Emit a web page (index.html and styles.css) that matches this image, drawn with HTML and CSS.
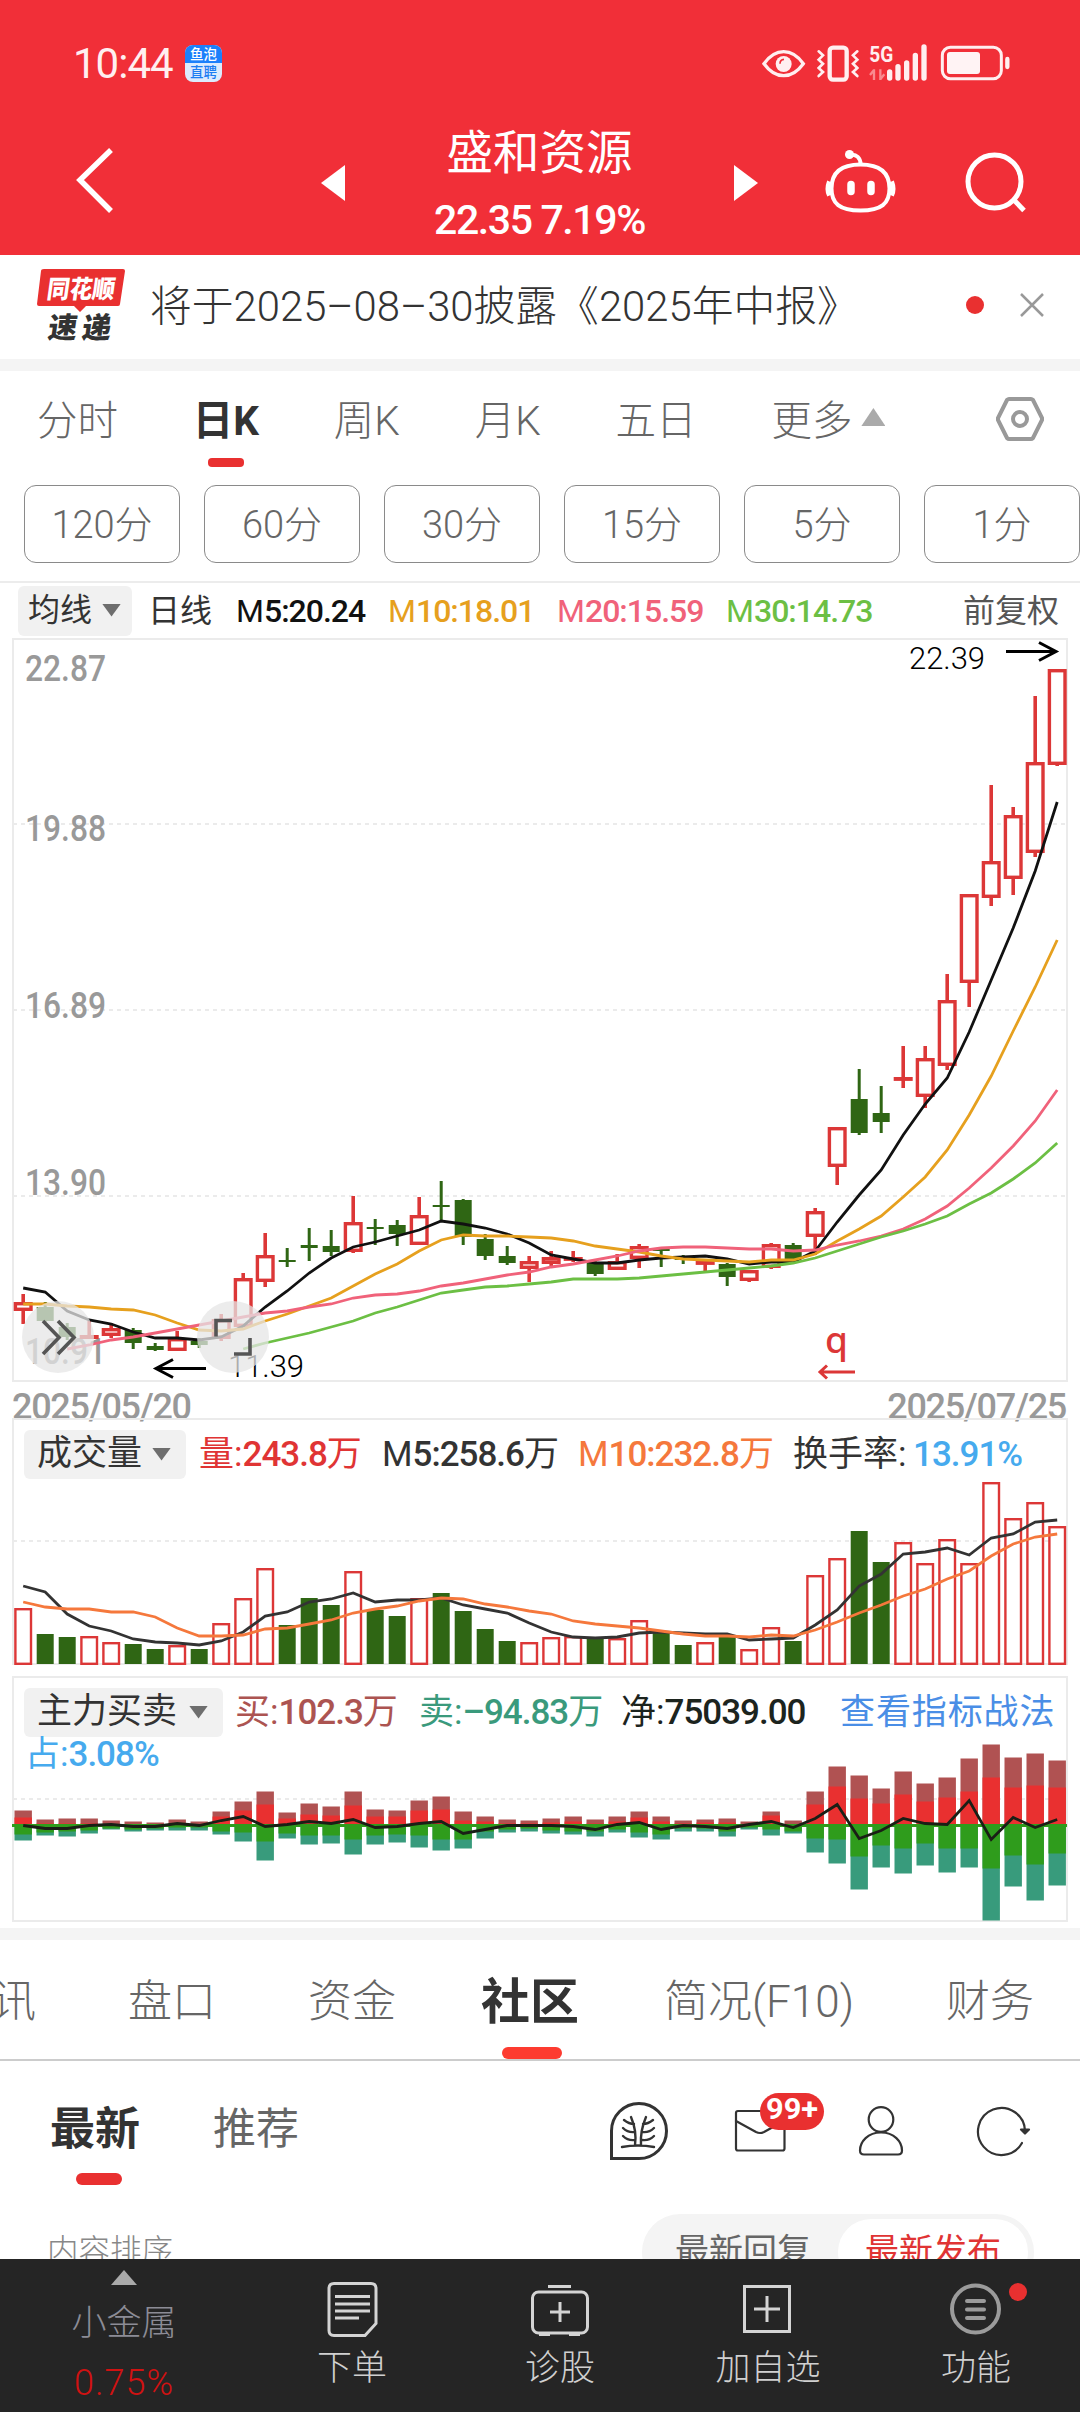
FILE: index.html
```html
<!DOCTYPE html>
<html lang="zh-CN">
<head>
  <meta charset="UTF-8" />
  <meta name="viewport" content="width=device-width, initial-scale=1" />
  <title>盛和资源 - 日K</title>
  <link rel="stylesheet" href="styles.css">
</head>
<body>
  <header>
    <div class="status-bar">
      <span class="time">10:44</span>
      <span class="app-badge"><i>鱼泡</i><i>直聘</i></span>
      <svg class="status-icons" viewBox="0 0 1020 198" width="340" height="66" fill="none" stroke="#ffeff0">
        <path d="M72 101Q98 65 131 65T190 101Q164 137 131 137T72 101Z" stroke-width="10"/>
        <circle cx="131" cy="102" r="24" fill="#ffeff0" stroke="none"/>
        <path d="M120 101q0-12 12-13" stroke="#f12f38" stroke-width="5"/>
        <rect x="269" y="53" width="51" height="96" rx="10" stroke-width="13"/>
        <path d="M236 64l13 12-13 13 13 12-13 13 13 12-13 12M352 64l-13 12 13 13-13 12 13 13-13 12 13 12" stroke-width="8" stroke-linecap="round"/>
        <text class="net" x="388" y="97" textLength="72" lengthAdjust="spacingAndGlyphs">5G</text>
        <path d="M402 118v32M390 135l12-15M421 118v32M433 133l-12 15" stroke="#f98a8f" stroke-width="7"/>
        <path d="M449 126v18M474 110v34M500 99v45M526 76v68M552 51v93" stroke-width="16" stroke-linecap="round"/>
        <rect x="607" y="52" width="177" height="94" rx="24" stroke-width="9"/>
        <rect x="621" y="66" width="99" height="66" rx="9" fill="#fff3f4" stroke="none"/>
        <path d="M802 87v24" stroke-width="13" stroke-linecap="round"/>
      </svg>
    </div>
    <div class="title-bar">
      <svg class="back" viewBox="65 126 60 129" width="60" height="129"><path d="M111 150L80 180l31 31" fill="none" stroke="#fff" stroke-width="5.5"/></svg>
      <div class="stock">
        <span class="tri tri-left"></span>
        <div class="stock-name">
          <h1>盛和资源</h1>
          <p>22.35 7.19%</p>
        </div>
        <span class="tri tri-right"></span>
      </div>
      <svg class="robot" viewBox="820 126 80 129" width="80" height="129" fill="none" stroke="#fff" stroke-width="4">
        <path d="M860.500 164.500c-20 0-29 9-29 24 0 15 8 22 29 22s29-7 29-22c0-15-9-24-29-24z"/>
        <path d="M860.500 164c0-6-4-10-10-9"/>
        <circle cx="849.500" cy="154.500" r="4.500" fill="#fff" stroke="none"/>
        <path d="M829.500 181.500q-3 8 0 14M891.500 181.500q3 8 0 14" stroke-width="5"/>
        <path d="M851 184.500v7M871 184.500v7" stroke-width="7.500" stroke-linecap="round"/>
      </svg>
      <svg class="search" viewBox="960 126 80 129" width="80" height="129" fill="none" stroke="#fff" stroke-width="5">
        <circle cx="994.500" cy="181.500" r="26.500"/>
        <path d="M1013 199l11 11.500"/>
      </svg>
    </div>
  </header>

  <section class="notice">
    <svg class="logo" viewBox="32 264 100 82" width="100" height="82">
      <path d="M44 269h79q2 0 2 2l-5 33q0 2-2 2H86l-6 6-6-6H39q-2 0-2-2l4-33q0-2 3-2z" fill="#e93030"/>
      <text class="logo-top" transform="translate(46 298) skewX(-8)" textLength="68" lengthAdjust="spacingAndGlyphs">同花顺</text>
      <text class="logo-bottom" transform="translate(47 338) skewX(-8)" textLength="63">速递</text>
    </svg>
    <span class="notice-text">将于2025–08–30披露《2025年中报》</span>
    <span class="dot"></span>
    <svg class="close" viewBox="0 0 28 28" width="28" height="28"><path d="M3 3l22 22M25 3L3 25" stroke="#999" stroke-width="2.500"/></svg>
  </section>

  <nav class="period">
    <a>分时</a>
    <a class="active">日K</a>
    <a>周K</a>
    <a>月K</a>
    <a>五日</a>
    <a class="more">更多<span class="tri-up"></span></a>
    <svg class="setting" viewBox="0 0 50 48" width="50" height="48" fill="none" stroke="#999" stroke-width="4">
      <path d="M14 4h22q1 0 2 1l9 18v2l-9 18q-1 1-2 1H14q-1 0-2-1L3 25v-2l9-18q1-1 2-1z"/>
      <circle cx="25" cy="24" r="7"/>
    </svg>
  </nav>
  <div class="minutes">
    <button>120分</button>
    <button>60分</button>
    <button>30分</button>
    <button>15分</button>
    <button>5分</button>
    <button>1分</button>
  </div>

  <section class="chart">
    <div class="legend ma-legend">
      <span class="chip">均线<i class="caret"></i></span>
      <span>日线</span>
      <span class="m5">M<b>5:20.24</b></span>
      <span class="m10">M<b>10:18.01</b></span>
      <span class="m20">M<b>20:15.59</b></span>
      <span class="m30">M<b>30:14.73</b></span>
      <span class="adjust">前复权</span>
    </div>
    <svg id="kline" viewBox="0 638 1080 744" width="1080" height="744"></svg>
    <div class="dates"><span>2025/05/20</span><span>2025/07/25</span></div>

    <div class="panel">
      <svg id="volume" viewBox="0 1418 1080 258" width="1080" height="258"></svg>
      <div class="legend vol-legend">
        <span class="chip">成交量<i class="caret"></i></span>
        <span class="red">量:<b>243.8</b>万</span>
        <span>M<b>5:258.6</b>万</span>
        <span class="orange">M<b>10:232.8</b>万</span>
        <span>换手率:</span>
        <span class="blue"><b>13.91%</b></span>
      </div>
    </div>
    <div class="panel">
      <svg id="flow" viewBox="0 1676 1080 252" width="1080" height="252"></svg>
      <div>
        <div class="legend flow-legend">
          <span class="chip">主力买卖<i class="caret"></i></span>
          <span class="buy">买:<b>102.3</b>万</span>
          <span class="sell">卖:<b>–94.83</b>万</span>
          <span class="net-in">净:<b>75039.00</b></span>
          <a class="link">查看指标战法</a>
        </div>
        <div class="ratio blue">占:<b>3.08%</b></div>
      </div>
    </div>
  </section>

  <nav class="tabs">
    <a>讯</a>
    <a>盘口</a>
    <a>资金</a>
    <a class="active">社区</a>
    <a>简况(F10)</a>
    <a>财务</a>
  </nav>

  <section class="community">
    <div class="sub-tabs">
      <a class="active">最新</a>
      <a>推荐</a>
      <svg viewBox="600 2090 440 76" width="440" height="76" fill="none" stroke="#333" stroke-width="2.200" stroke-linecap="round" stroke-linejoin="round">
        <path d="M611.500 2158.500V2131a27.500 27.500 0 1 1 27.500 27.500z" stroke-width="3" stroke-linejoin="miter"/>
        <path d="M622 2147q16-3 32 0M635 2145q2-14-4-28M641 2145q-1-14 5-28M624 2120q5 4 10 4M623 2128q5 5 12 4M623 2136q5 5 12 4M653 2120q-5 4-10 4M654 2128q-5 5-12 4M654 2136q-5 5-12 4" stroke-width="2.400"/>
        <rect x="736" y="2111" width="48.500" height="39.500" rx="2"/>
        <path d="M736 2121l20 11q4 2 8 0l20-11"/>
        <circle cx="881" cy="2119.500" r="12.300"/>
        <path d="M881 2132.500c-13 0-21 9-21 18q0 4 4 4h34q4 0 4-4c0-9-8-18-21-18z"/>
        <path d="M1025 2131a23.500 23.500 0 1 0-3 12"/>
        <path d="M1021 2129.500h8l-4 4z" fill="#333"/>
        <rect x="760" y="2093" width="64" height="37" rx="18.500" fill="#e93030" stroke="none"/>
        <text class="badge" x="766" y="2119" textLength="52" lengthAdjust="spacingAndGlyphs">99+</text>
      </svg>
    </div>
    <div class="sort">
      <span class="sort-title">内容排序</span>
      <div class="switch"><span>最新回复</span><span class="on">最新发布</span></div>
    </div>
  </section>

  <footer>
    <div class="sector">
      <span class="tri-up"></span>
      <span>小金属</span>
      <strong>0.75%</strong>
    </div>
    <a>
      <svg viewBox="322 2279 60 60" width="60" height="60" fill="none" stroke="#d4d4d4" stroke-width="3">
        <path d="M334 2283.500h37q5 0 5 5v35l-11 12h-31q-5 0-5-5v-42q0-5 5-5z"/>
        <path d="M335 2296.500h35M335 2304h35M335 2311h35M335 2318h24"/>
      </svg>
      下单
    </a>
    <a>
      <svg viewBox="530 2279 60 60" width="60" height="60" fill="none" stroke="#d4d4d4" stroke-width="3">
        <rect x="532.500" y="2292" width="55" height="41" rx="6"/>
        <path d="M548 2286.500h23M560 2302v20M550 2312h20M539 2334.500h11M569 2334.500h11" />
      </svg>
      诊股
    </a>
    <a>
      <svg viewBox="738 2279 60 60" width="60" height="60" fill="none" stroke="#d4d4d4" stroke-width="3">
        <path d="M744.500 2286.500h45v45h-45zM767 2296v26M754 2309h26"/>
      </svg>
      加自选
    </a>
    <a>
      <svg viewBox="946 2279 60 60" width="60" height="60" fill="none" stroke="#9b9b9b" stroke-width="4">
        <circle cx="975.500" cy="2309" r="23.500"/>
        <path d="M967 2301h17M967 2309.500h17M967 2318h17" stroke-linecap="round"/>
      </svg>
      功能
      <i class="dot"></i>
    </a>
  </footer>
  <script src="chart.js"></script>
</body>
</html>
```
FILE: styles.css
```css
* {
  box-sizing: border-box;
}
body {
  margin: 0;
  width: 1080px;
  height: 2412px;
  overflow: hidden;
  background: #fff;
  color: #333;
  font-family: Roboto, "Noto Sans CJK SC", sans-serif;
  font-weight: 300;
  display: flex;
  flex-direction: column;
}
svg {
  display: block;
  flex: none;
}
i {
  font-style: normal;
}
b {
  font-weight: 500;
}
span, a {
  white-space: nowrap;
}

/* header */
header {
  height: 255px;
  background: #f12f38;
  color: #fff;
}
.status-bar {
  height: 126px;
  display: flex;
  align-items: center;
  padding-left: 73px;
}
.time {
  width: 112px;
  font-size: 42px;
  font-weight: 400;
  letter-spacing: -1px;
  color: #ffeff0;
}
.app-badge {
  width: 37px;
  height: 37px;
  border-radius: 8px;
  overflow: hidden;
  background: #dcebfd;
  color: #1c7df2;
  font-size: 13.5px;
  font-weight: 500;
  text-align: center;
  line-height: 18px;
}
.app-badge i {
  display: block;
}
.app-badge i:first-child {
  background: #1c80fb;
  color: #fff;
}
.status-icons {
  margin-left: 518px;
}
.net {
  font-size: 66px;
  font-weight: 700;
  fill: #ffeff0;
  stroke: none;
}
.title-bar {
  height: 129px;
  display: flex;
  padding-left: 65px;
}
.stock {
  width: 437px;
  margin-left: 196px;
  display: flex;
  justify-content: space-between;
}
.stock-name {
  text-align: center;
}
.stock h1 {
  margin: 0;
  font-size: 46.500px;
  line-height: 54px;
  font-weight: 400;
}
.stock p {
  margin: 15px 0 0;
  font-size: 41px;
  line-height: 50px;
  font-weight: 500;
  letter-spacing: -1.400px;
}
.tri {
  margin-top: 39px;
  width: 24px;
  height: 36px;
  background: #fff;
}
.tri-left {
  clip-path: polygon(100% 0, 100% 100%, 0 50%);
}
.tri-right {
  clip-path: polygon(0 0, 0 100%, 100% 50%);
}
.robot {
  margin-left: 62px;
}
.search {
  margin-left: 60px;
}

/* notice */
.notice {
  height: 116px;
  border-bottom: 12px solid #f4f4f4;
  display: flex;
  align-items: center;
  padding: 0 34px 4px 32px;
}
.logo-top {
  font-size: 25px;
  font-weight: 900;
  fill: #fff;
}
.logo-bottom {
  font-size: 29px;
  font-weight: 900;
  fill: #333;
}
.notice-text {
  margin-left: 18px;
  padding-bottom: 5px;
  flex: 1;
  font-size: 41.800px;
}
.dot {
  width: 18px;
  height: 18px;
  border-radius: 50%;
  background: #e93030;
}
.close {
  margin-left: 34px;
}

/* period tabs */
.period {
  height: 98px;
  display: flex;
  align-items: center;
  gap: 74.800px;
  padding: 0 0 6px 37px;
  font-size: 40.500px;
  color: #666;
}
.period .active {
  position: relative;
  color: #333;
  font-weight: 700;
}
.period .active::after {
  content: "";
  position: absolute;
  left: 15px;
  bottom: -20px;
  width: 36px;
  height: 9px;
  border-radius: 4px;
  background: #e93030;
}
.more {
  display: flex;
  align-items: center;
}
.tri-up {
  width: 24px;
  height: 18px;
  margin-left: 9px;
  background: #aaa;
  clip-path: polygon(50% 0, 100% 100%, 0 100%);
}
.setting {
  margin: 3px 0 0 35px;
}
.minutes {
  height: 112px;
  padding: 16px 0 0 24px;
  display: flex;
  gap: 24px;
}
.minutes button {
  flex: none;
  width: 156px;
  height: 78px;
  padding: 0 0 5px;
  border: 1.500px solid #8a8a8a;
  border-radius: 12px;
  background: #fff;
  color: #666;
  font: inherit;
  font-size: 38px;
}

/* charts */
.chart {
  height: 1359px;
  border-top: 2px solid #ececec;
  border-bottom: 12px solid #f4f4f4;
}
.legend {
  display: grid;
  align-items: center;
  font-size: 35px;
  line-height: 42px;
  font-weight: 400;
}
.legend > * {
  padding-top: 1px;
}
.legend .chip {
  justify-self: start;
  height: 49px;
  padding: 0 15px 0 13px;
  border-radius: 6px;
  background: #f1f1f1;
  display: flex;
  align-items: center;
}
.legend b, .ratio b {
  letter-spacing: -1px;
}
.caret {
  width: 19px;
  height: 13px;
  margin-left: 10px;
  background: #6e6e6e;
  clip-path: polygon(0 0, 100% 0, 50% 100%);
}
.legend.ma-legend {
  height: 55px;
  padding-left: 18px;
  grid-template-columns: 130px 88px 152px 169px 169px 237px 1fr;
  font-size: 32px;
}
.ma-legend .chip {
  height: 50px;
  padding: 0 11px 1px 10px;
}
.m5 { color: #111; }
.m10 { color: #e6a01e; }
.m20 { color: #f0627a; }
.m30 { color: #6cbf44; }
.adjust { color: #555; }
.dates {
  height: 36px;
  padding: 0 14px 0 12px;
  display: flex;
  justify-content: space-between;
  font-size: 36px;
  line-height: 50px;
  font-weight: 500;
  color: #999;
  letter-spacing: -1.300px;
}
.panel {
  display: grid;
}
.panel > * {
  grid-area: 1 / 1;
}
.vol-legend {
  height: 50px;
  margin-top: 11px;
  padding-left: 24px;
  grid-template-columns: 175px 183px 196px 215px 120px 1fr;
}
.flow-legend {
  height: 50px;
  margin-top: 11px;
  padding-left: 24px;
  grid-template-columns: 211px 184px 202px 219px 1fr;
}
.flow-legend .caret {
  margin-left: 12px;
}
.ratio {
  padding-left: 25px;
  margin-top: -5px;
  font-size: 35px;
  line-height: 46px;
  font-weight: 400;
}
.red { color: #e03434; }
.orange { color: #f5783c; }
.blue { color: #46aaee; }
.buy { color: #ac5451; }
.sell { color: #3a9a7c; }
.net-in { color: #1c241e; }
.link { color: #4a8ee6; letter-spacing: 0.900px; }
.axis {
  font-size: 36px;
  font-weight: 500;
  fill: #999;
}
.mark {
  font-size: 31px;
  font-weight: 300;
  fill: #000;
}
.mark-q {
  font-family: "Noto Sans", sans-serif;
  font-size: 37px;
  font-weight: 500;
  fill: #dc3737;
}

/* info tabs */
.tabs {
  height: 121px;
  border-bottom: 2px solid #ccc;
  display: flex;
  align-items: center;
  gap: 92px;
  font-size: 44px;
  line-height: 125px;
  color: #666;
}
.tabs a {
  height: 100%;
}
.tabs a:first-child {
  margin-left: -8px;
}
.tabs .active {
  margin: 0 -7px;
  color: #333;
  font-size: 49px;
  font-weight: 700;
  position: relative;
}
.tabs .active::after {
  content: "";
  position: absolute;
  left: 21px;
  bottom: 0;
  width: 60px;
  height: 12px;
  border-radius: 6px;
  background: #fd3b30;
}

/* community */
.community {
  height: 198px;
  overflow: hidden;
}
.sub-tabs {
  height: 153px;
  display: flex;
  align-items: flex-start;
  padding: 29px 0 0 50px;
}
.sub-tabs a {
  font-size: 43px;
  line-height: 79px;
  font-weight: 400;
  color: #666;
}
.sub-tabs .active {
  width: 90px;
  margin-right: 73px;
  font-size: 45px;
  font-weight: 700;
  color: #333;
  position: relative;
}
.sub-tabs .active::after {
  content: "";
  position: absolute;
  left: 26px;
  top: 83px;
  width: 46px;
  height: 12px;
  border-radius: 6px;
  background: #e93030;
}
.sub-tabs svg {
  margin-left: 301px;
}
.badge {
  font-size: 30px;
  font-weight: 700;
  fill: #fff;
  stroke: none;
}
.sort {
  display: flex;
  justify-content: space-between;
  padding: 0 46px 0 47px;
}
.sort-title {
  font-size: 31.500px;
  line-height: 76px;
  color: #888;
}
.switch {
  width: 392px;
  height: 76px;
  padding: 5px 6px 5px 0;
  border-radius: 38px;
  background: #f4f4f4;
  display: flex;
  justify-content: space-between;
  font-size: 34px;
  line-height: 65px;
  font-weight: 400;
  color: #666;
}
.switch span {
  width: 190px;
  padding-left: 27px;
  border-radius: 33px;
}
.switch span:first-child {
  padding-left: 33px;
}
.switch .on {
  background: #fff;
  color: #e03434;
}

/* bottom bar */
footer {
  height: 153px;
  background: #252525;
  display: grid;
  grid-template-columns: 248px repeat(4, 208px);
  font-size: 35px;
  color: #d0d0d0;
}
footer a {
  position: relative;
  display: flex;
  flex-direction: column;
  align-items: center;
  padding-top: 20px;
  line-height: 52px;
}
footer a svg {
  margin-bottom: 4px;
}
footer a .dot {
  position: absolute;
  left: 137px;
  top: 24px;
}
.sector {
  display: flex;
  flex-direction: column;
  align-items: center;
  padding-top: 11px;
  color: #8c8c96;
  line-height: 52px;
}
.sector .tri-up {
  width: 26px;
  height: 15px;
  margin: 0 0 13px;
}
.sector strong {
  margin-top: 7px;
  font-weight: 300;
  font-size: 36px;
  letter-spacing: 1px;
  color: #d01212;
}
```
FILE: chart.js
```js
const X0 = 23.2, STEP = 22;
const RED = '#dc3737', GREEN = '#2f6614', GRID = '#ebebeb';
const x = i => X0 + i * STEP;

// [up, high, top, bottom, low]
const candles = [
  [1,1294,1302,1311,1324],[0,1302,1307,1321,1322],[0,1323,1327,1337,1340],[1,1321,1335,1339,1339],
  [1,1323,1328,1336,1338],[0,1328,1330,1343,1349],[0,1343,1346,1350,1351],[1,1331,1338,1351,1351],
  [0,1338,1341,1345,1348],[1,1314,1319,1339,1341],[1,1273,1278,1327,1327],[1,1233,1255,1282,1287],
  [0,1248,1260,1262,1267],[0,1228,1245,1248,1261],[0,1230,1246,1252,1256],[1,1196,1222,1252,1253],
  [0,1219,1227,1229,1245],[0,1220,1225,1234,1246],[1,1197,1215,1245,1245],[0,1181,1205,1207,1221],
  [0,1199,1200,1237,1245],[0,1234,1239,1256,1260],[0,1246,1256,1263,1265],[1,1256,1261,1269,1282],
  [1,1251,1257,1264,1266],[1,1251,1257,1260,1262],[0,1261,1262,1274,1276],[1,1254,1261,1270,1270],
  [1,1244,1246,1259,1268],[0,1249,1249,1251,1267],[0,1255,1258,1260,1264],[1,1260,1261,1264,1271],
  [0,1263,1264,1277,1286],[1,1270,1270,1281,1282],[1,1243,1244,1268,1269],[0,1243,1245,1259,1260],
  [1,1208,1211,1237,1255],[1,1127,1127,1167,1185],[0,1069,1099,1133,1135],[0,1086,1113,1122,1133],
  [1,1046,1077,1080,1088],[1,1046,1058,1097,1108],[1,974,1000,1066,1070],[1,894,894,983,1007],
  [1,785,861,898,906],[1,807,815,879,895],[1,696,762,853,857],[1,669,669,765,766]
];
const ma5 = [1288,1292,1311,1320,1324,1332,1338,1338,1340,1337,1326,1307,1291,1273,1258,1247,1242,1236,1230,1221,1224,1228,1234,1243,1255,1259,1263,1263,1260,1258,1257,1256,1259,1264,1262,1262,1251,1222,1195,1170,1135,1104,1078,1032,980,928,871,802];
const ma10 = [1304,1304,1306,1307,1309,1310,1315,1323,1330,1331,1329,1321,1314,1306,1298,1286,1274,1264,1251,1240,1235,1236,1236,1237,1238,1241,1246,1249,1252,1256,1259,1260,1261,1262,1260,1260,1254,1241,1229,1216,1197,1177,1150,1115,1076,1031,987,940];
const ma20 = [1349,1345,1340,1337,1333,1329,1325,1321,1317,1313,1311,1307,1304,1298,1295,1294,1291,1286,1283,1279,1275,1272,1267,1264,1260,1256,1251,1248,1247,1247,1248,1249,1249,1251,1250,1245,1241,1236,1229,1219,1206,1188,1168,1146,1121,1090];
const ma30 = [1349,1343,1338,1333,1327,1321,1313,1307,1300,1293,1290,1287,1286,1284,1282,1279,1279,1279,1278,1276,1274,1272,1270,1268,1266,1263,1258,1251,1244,1237,1231,1224,1216,1204,1193,1179,1163,1143];

const volume = [1608,1634,1637,1636,1642,1644,1649,1645,1649,1623,1598,1568,1625,1598,1605,1571,1610,1616,1598,1593,1611,1629,1641,1642,1637,1636,1639,1638,1620,1633,1645,1642,1637,1649,1627,1641,1575,1558,1531,1562,1542,1563,1539,1563,1482,1518,1502,1526];
const vol5 = [1586,1592,1614,1626,1631,1639,1642,1643,1645,1641,1632,1616,1612,1602,1599,1593,1602,1600,1600,1598,1605,1609,1613,1623,1632,1637,1638,1637,1633,1632,1633,1634,1634,1640,1639,1638,1625,1610,1586,1574,1554,1552,1548,1555,1538,1534,1522,1520];
const vol10 = [1602,1607,1609,1609,1612,1612,1617,1628,1636,1636,1635,1629,1628,1624,1620,1613,1609,1606,1601,1598,1599,1604,1607,1611,1614,1621,1624,1626,1628,1631,1634,1636,1636,1637,1635,1636,1630,1622,1613,1605,1596,1589,1579,1571,1556,1544,1537,1534];

// distance from the zero line: [big buy, buy, sell, big sell, net]
const ZERO = 1825.5;
const flow = [
  [15,8,9,15,0],[6,2,7,10,3],[7,2,6,11,3],[7,2,5,8,0],[5,1,3,4,-1],[4,1,4,6,1],[3,1,3,5,1],[6,2,2,5,-2],
  [4,1,2,5,0],[14,9,6,9,-5],[24,15,7,16,-9],[34,21,16,35,1],[13,7,8,13,-1],[22,11,10,19,-4],[19,10,10,18,-2],[34,20,14,29,-6],
  [16,9,10,19,2],[15,9,9,17,1],[25,15,10,22,-2],[29,16,14,25,-4],[14,5,14,23,8],[9,4,6,13,4],[6,2,4,7,0],[5,2,3,6,0],
  [7,3,5,8,0],[9,4,6,9,1],[6,2,6,11,4],[9,4,4,7,-1],[14,8,7,12,-3],[9,4,9,14,4],[5,2,3,6,0],[6,3,3,6,1],
  [7,3,6,11,3],[4,1,2,4,-1],[14,10,4,10,-4],[5,1,6,8,2],[34,21,13,27,-7],[59,39,14,38,-21],[50,27,31,64,13],[37,22,20,42,5],
  [54,31,23,48,-7],[42,24,18,40,-2],[48,28,23,47,-1],[67,34,23,42,-25],[81,48,43,95,14],[68,38,30,61,-8],[72,40,39,75,2],[65,38,28,60,-6]
];

const rect = (i, w, top, bottom, fill) =>
  `<rect x="${(x(i) - w / 2).toFixed(1)}" y="${top}" width="${w}" height="${Math.max(bottom - top, 1)}" fill="${fill}"/>`;
const box = (i, w, top, bottom, s) =>
  `<rect x="${(x(i) - w / 2 + s / 2).toFixed(1)}" y="${top + s / 2}" width="${w - s}" height="${Math.max(bottom - top - s, 0.5)}" fill="#fff" stroke="${RED}" stroke-width="${s}"/>`;
const line = (values, color, start = 0) =>
  `<polyline points="${values.map((v, i) => x(i + start).toFixed(1) + ',' + v).join(' ')}" fill="none" stroke="${color}" stroke-width="2.8"/>`;
const dashed = y => `<path d="M13 ${y}H1067" stroke="${GRID}" stroke-width="2" stroke-dasharray="4 4"/>`;
const axis = (y, t) => `<text class="axis" x="25" y="${y}" textLength="81" lengthAdjust="spacingAndGlyphs">${t}</text>`;

function drawKline() {
  let s = `<rect x="13" y="639" width="1054" height="742" fill="none" stroke="${GRID}" stroke-width="2"/>`;
  s += dashed(824) + dashed(1010) + dashed(1196);
  s += axis(681, '22.87') + axis(841, '19.88') + axis(1018, '16.89') + axis(1195, '13.90') + axis(1364, '10.91');
  candles.forEach(([up, high, top, bottom, low], i) => {
    s += rect(i, up ? 3.6 : 3, high, low, up ? RED : GREEN);
    s += up ? box(i, 19, top, bottom, 3.4) : rect(i, 17, top, bottom, GREEN);
  });
  s += line(ma5, '#111') + line(ma10, '#e6a01e') + line(ma20, '#f0627a', 2) + line(ma30, '#6cbf44', 10);
  s += '<path d="M1006 651.500h50M1039 642.500l17 9-17 9M206 1368.500h-50M173 1359.500l-17 9 17 9" fill="none" stroke="#000" stroke-width="3"/>';
  s += '<text class="mark" x="909" y="669" textLength="76">22.39</text><text class="mark" x="228" y="1377" textLength="76">11.39</text>';
  s += `<text class="mark-q" x="825" y="1353">q</text><path d="M855 1372h-35M827 1365.500l-7 6.500 7 6.500" fill="none" stroke="${RED}" stroke-width="3"/>`;
  // floating buttons
  s += '<g fill="#e6e6e6" fill-opacity="0.75"><circle cx="58" cy="1337" r="36"/><circle cx="233" cy="1337" r="36"/></g>';
  s += '<g fill="none" stroke="#555" stroke-width="3.6"><path d="M43 1321l16 16.500-16 16.500M58 1321l16 16.500-16 16.500"/><path d="M232 1320.500h-16v16M250 1338v16h-16"/></g>';
  document.getElementById('kline').innerHTML = s;
}

function drawVolume() {
  let s = `<path d="M13 1664V1419H1067V1664Z" fill="none" stroke="${GRID}" stroke-width="2"/>` + dashed(1541);
  volume.forEach((v, i) => {
    s += candles[i][0] ? box(i, 18, v, 1665, 2.4) : rect(i, 17, v, 1664, GREEN);
  });
  s += line(vol5, '#333') + line(vol10, '#f5783c');
  document.getElementById('volume').innerHTML = s;
}

function drawFlow() {
  let s = `<rect x="13" y="1677" width="1054" height="244" fill="none" stroke="${GRID}" stroke-width="2"/>` + dashed(1799);
  flow.forEach(([bigBuy, buy, sell, bigSell], i) => {
    s += rect(i, 17.4, ZERO - bigBuy, ZERO, '#b05252') + rect(i, 17.4, ZERO - buy, ZERO, '#e93030');
    s += rect(i, 17.4, ZERO, ZERO + bigSell, '#389b7c') + rect(i, 17.4, ZERO, ZERO + sell, '#2f9c1c');
  });
  s += `<path d="M12 ${ZERO}H1067" stroke="#2f9c1c" stroke-width="3"/>`;
  s += line(flow.map(f => ZERO + f[4]), '#1a1f16');
  document.getElementById('flow').innerHTML = s;
}

drawKline();
drawVolume();
drawFlow();
```
